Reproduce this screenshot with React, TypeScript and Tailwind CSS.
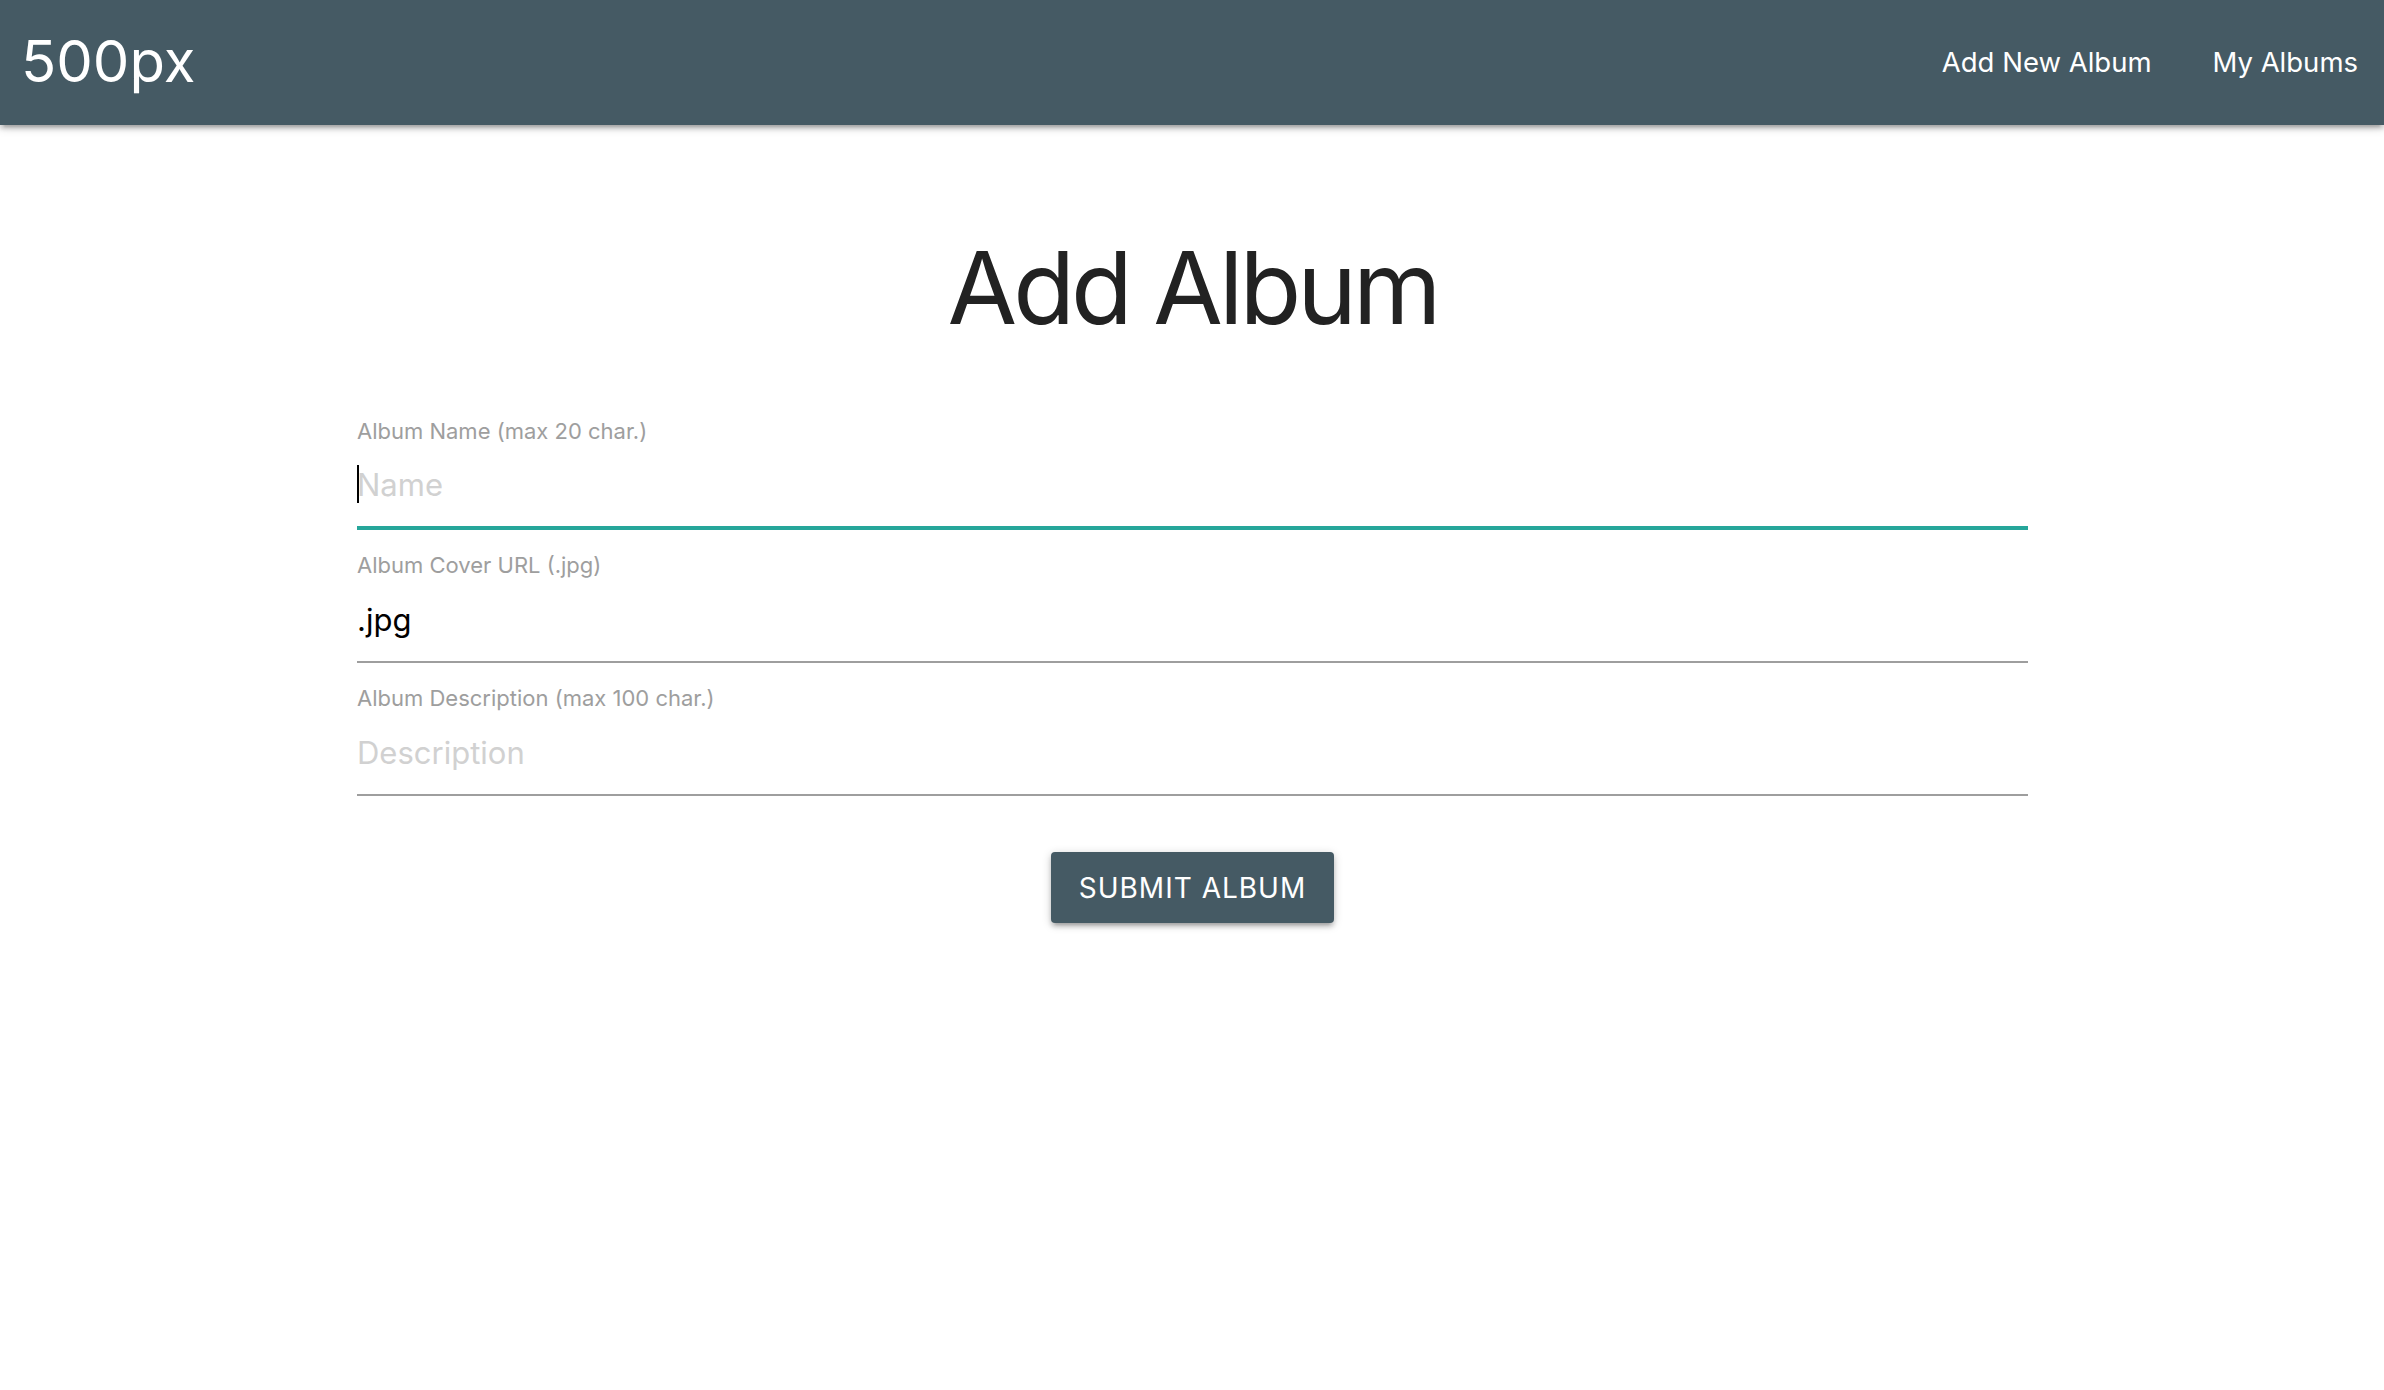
import { useState } from 'react'

const font = { fontFamily: 'Inter, "Noto Sans", sans-serif' }

function Field({
  label,
  placeholder,
  value,
  focused,
}: {
  label: string
  placeholder: string
  value?: string
  focused?: boolean
}) {
  const [text, setText] = useState(value ?? '')
  return (
    <div className="flex flex-col">
      <label className="h-[26px] text-[22px] leading-[26px] text-[#9e9e9e]">{label}</label>
      <div className="relative">
        <input
          value={text}
          onChange={(e) => setText(e.target.value)}
          placeholder={placeholder}
          className={
            'w-full bg-transparent text-[31px] text-black outline-none placeholder:text-[#d1d1d1] ' +
            (focused ? 'h-[86px] border-b-4 border-[#26a69a] pb-[2px]' : 'h-[85px] border-b-2 border-[#9e9e9e]')
          }
        />
        {/* caret of the focused field */}
        {focused && <span className="absolute left-0 top-[21px] h-[38px] w-[2px] bg-black" />}
      </div>
    </div>
  )
}

export default function App() {
  return (
    <div className="min-h-screen bg-white" style={font}>
      {/* Navbar */}
      <nav className="flex h-[125px] items-center justify-between bg-[#455a64] pl-[21px] pr-[26px] shadow-[0_4px_4px_0_rgba(0,0,0,0.14),0_6px_2px_-4px_rgba(0,0,0,0.12),0_2px_10px_0_rgba(0,0,0,0.2)]">
        <a className="pb-[4px] text-[58px] leading-none text-white">500px</a>
        <ul className="flex gap-[61px] text-[27.5px] text-white">
          <li>Add New Album</li>
          <li>My Albums</li>
        </ul>
      </nav>

      <div className="mx-auto w-[1672px] pl-[1px]">
        <h1 className="mt-[112px] text-center text-[101px] leading-none tracking-[-4px] text-[#222]">Add Album</h1>

        <form className="mt-[80px] flex flex-col gap-[22px]">
          <Field label="Album Name (max 20 char.)" placeholder="Name" focused />
          <Field label="Album Cover URL (.jpg)" placeholder="URL" value=".jpg" />
          <Field label="Album Description (max 100 char.)" placeholder="Description" />
        </form>

        <div className="mt-[56px] flex justify-center">
          <button
            type="button"
            className="h-[71px] w-[283px] rounded-[4px] bg-[#455a64] text-[28px] tracking-[1px] text-white shadow-[0_4px_4px_0_rgba(0,0,0,0.14),0_6px_2px_-4px_rgba(0,0,0,0.12),0_2px_10px_0_rgba(0,0,0,0.2)]"
          >
            SUBMIT ALBUM
          </button>
        </div>
      </div>
    </div>
  )
}
